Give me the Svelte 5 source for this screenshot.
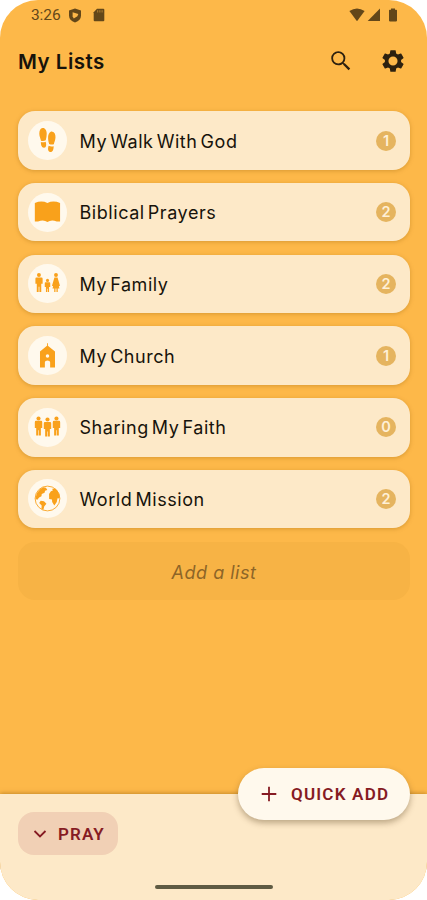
<script lang="ts">
  type List = { name: string; icon: string; count: number };

  let lists = $state<List[]>([
    { name: "My Walk With God", icon: "steps", count: 1 },
    { name: "Biblical Prayers", icon: "book", count: 2 },
    { name: "My Family", icon: "family", count: 2 },
    { name: "My Church", icon: "church", count: 1 },
    { name: "Sharing My Faith", icon: "people", count: 0 },
    { name: "World Mission", icon: "globe", count: 2 },
  ]);
</script>

{#snippet listIcon(name: string)}
  <svg class="list-icon" viewBox="0 0 40 40" aria-hidden="true">
    {#if name === "steps"}
      <path d="M14.9 7.2c2.6-.3 4.300 2.400 4.300 5.800 0 2.300-.4 4.600-1 6.800-1.500.8-3.200.9-4.900.4-.3-2.100-1.700-4.400-1.700-7.200 0-3 1.100-5.600 3.300-5.800z" />
      <path d="M13.200 21.600c1.600.4 3.300.3 4.900-.4.9 2.700.8 6-1.600 6.200-2.400.2-3.400-2.800-3.300-5.800z" />
      <path d="M24.900 10.900c2.300.3 3.400 2.700 3.300 5.700-.1 2.700-1.200 4.900-1.700 7.200-1.700.6-3.300.4-4.800-.3-.8-2.300-1.200-4.700-1.100-6.800.2-3.500 1.800-6.100 4.300-5.800z" />
      <path d="M21.200 25.500c1.600.7 3.200.8 5.100.4.1 2.900-.9 6.300-3.500 6-2.500-.3-2.700-3.700-1.600-6.400z" />
    {:else if name === "book"}
      <path d="M7 10.200Q14 7.400 19.900 10.200Q26 7.400 32.900 10.200V29.200H29.500Q24 26.900 19.900 29.700Q16 26.900 10.300 29.200H7z" />
    {:else if name === "family"}
      <circle cx="11.200" cy="11.300" r="2" />
      <path d="M8.600 13.800h5.200q1.200 0 1.200 1.300v5.200h-1.400v8.300h-1.900v-5.200h-.8v5.200H9v-8.300H7.600v-5.200q0-1.300 1-1.300z" />
      <circle cx="20" cy="16.800" r="1.600" />
      <path d="M17.900 18.800h4.200q.7 0 .7.900v4h-1.200v5h-1.300v-3.200h-.6v3.200h-1.300v-5h-1.200v-4q0-.9.700-.9z" />
      <circle cx="28.700" cy="11.300" r="2" />
      <path d="M27.100 13.800h3.200l2.500 8.500-1.200.4.700 2.300h-1.800v3.700h-1.300v-3.700h-1v3.700h-1.300v-3.700h-1.800l.7-2.300-1.200-.4z" />
    {:else if name === "church"}
      <path fill-rule="evenodd" d="M19.500 7.500h.9v2.600l7.300 5.900v16.200h-5v-5.200q0-1.800-2.700-1.800t-2.700 1.800v5.200h-5V16l7.200-5.900zM20 18.700a1.800 1.800 0 1 0 0 3.600 1.800 1.800 0 1 0 0-3.600z" />
    {:else if name === "people"}
      {#each [10.8, 20, 29.2] as x, i}
        <g transform="translate({x} {i === 1 ? 0.8 : -0.3})">
          <circle cx="0" cy="11" r="2.100" />
          <path d="M-2.600 13.500h5.200q1.200 0 1.200 1.300v6H2.400v7.700H.3v-5.300h-.6v5.300h-2.100v-7.700h-1.400v-6q0-1.300 1.200-1.300z" />
        </g>
      {/each}
    {:else if name === "globe"}
      <circle class="outline" cx="20" cy="20" r="12.700" />
      <path d="M9 14.500q2.600-4.400 6.600-6l2.800.4 1.400 2.400-2.300.8-.5 2-2.900 1.400-.3 2.200-2.400 1.400-1.800 2.300-2-1z" />
      <path d="M13 22.400l3.400.5 2.500 2.500-2.300 2.900-.8 3.200-2-.5.200-3.700-2.500-2.700z" />
      <path d="M21.600 15.500l1.900-2.900 2-.8-.7-1.800 3.400.1q3 2.300 4 6l.2 3.900-2.100-.3-.8 3.900-2.500 3.500-2.200-3.500-.2-2.500-2.900-.5z" />
    {/if}
  </svg>
{/snippet}

<div class="screen">
  <div class="status-bar">
    <span class="clock">3:26</span>
    <svg class="shield" width="14" height="15" viewBox="0 0 14 15">
      <path d="M7 .5l6 2v5q0 4.800-6 7-6-2.200-6-7v-5z" />
      <path class="cut" d="M4.600 4.300L10.300 5.900 9.400 8.200 5.800 10.400 4.600 8.500z" />
    </svg>
    <svg class="card-icon" width="12" height="14" viewBox="0 0 12 14">
      <path d="M4 .8h6.300q1 0 1 1v10.400q0 1-1 1H1.700q-1 0-1-1V4.200z" />
      <path class="slots" d="M4.700 2.200v2.300M6.900 2.200v2.300M9.100 2.200v2.300" />
    </svg>
    <div class="signals">
      <svg width="16" height="14" viewBox="0 0 16 14"><path d="M.4 3Q8-2.200 15.600 3L8 13.300z" /></svg>
      <svg width="14" height="14" viewBox="0 0 14 14"><path d="M.7 13L13 .4V13z" /></svg>
      <svg class="battery" width="10" height="14" viewBox="0 0 10 14"><path d="M3 .5h4v1.300h1.200q.8 0 .8.800v10q0 .8-.8.800H1.800q-.8 0-.8-.8v-10q0-.8.800-.8H3z" /></svg>
    </div>
  </div>

  <header>
    <h1>My Lists</h1>
    <button type="button" class="icon-btn" aria-label="Search">
      <svg width="26" height="26" viewBox="0 0 24 24">
        <path d="M15.500 14h-.79l-.28-.27A6.471 6.471 0 0 0 16 9.500 6.500 6.500 0 1 0 9.500 16c1.610 0 3.090-.59 4.230-1.570l.27.28v.79l5 4.990L20.490 19l-4.990-5zm-6 0.300C6.850 14.300 4.700 12.150 4.700 9.500S6.850 4.700 9.500 4.700 14.300 6.850 14.300 9.500 12.150 14.300 9.500 14.300z" />
      </svg>
    </button>
    <button type="button" class="icon-btn" aria-label="Settings">
      <svg width="26" height="26" viewBox="0 0 24 24">
        <path fill-rule="evenodd" d="M19.430 12.980c.04-.32.07-.64.07-.98s-.03-.66-.07-.98l2.110-1.650c.19-.15.24-.42.12-.64l-2-3.460c-.12-.22-.39-.3-.61-.22l-2.490 1c-.52-.4-1.080-.73-1.690-.98l-.38-2.650A.488.488 0 0 0 14 2h-4c-.25 0-.46.18-.49.42l-.38 2.650c-.61.25-1.170.59-1.690.98l-2.490-1c-.23-.09-.49 0-.61.22l-2 3.460c-.13.22-.07.49.12.64l2.110 1.650c-.04.32-.07.65-.07.98s.03.66.07.98l-2.110 1.650c-.19.15-.24.42-.12.64l2 3.460c.12.22.39.3.61.22l2.490-1c.52.4 1.080.73 1.690.98l.38 2.650c.03.24.24.42.49.42h4c.25 0 .46-.18.49-.42l.38-2.650c.61-.25 1.170-.59 1.690-.98l2.490 1c.23.09.49 0 .61-.22l2-3.460c.12-.22.07-.49-.12-.64zM12 16.200a4.200 4.200 0 1 1 0-8.400 4.200 4.200 0 0 1 0 8.400z" />
      </svg>
    </button>
  </header>

  <main>
    {#each lists as list}
      <button type="button" class="list-card">
        <span class="list-avatar">{@render listIcon(list.icon)}</span>
        <span class="list-name">{list.name}</span>
        <span class="list-count">{list.count}</span>
      </button>
    {/each}
    <button type="button" class="add-list">Add a list</button>
  </main>

  <footer>
    <button type="button" class="pray">
      <svg width="14" height="10" viewBox="0 0 14 10"><path d="M1.500 2L7 7.500 12.500 2" /></svg>
      PRAY
    </button>
    <button type="button" class="quick-add">
      <svg width="16" height="16" viewBox="0 0 16 16"><path d="M8 .7v14.600M.7 8h14.600" /></svg>
      QUICK ADD
    </button>
    <div class="home-bar"></div>
  </footer>
</div>

<style>
  :global(body) {
    background: #fff;
  }

  .screen {
    display: flex;
    flex-direction: column;
    width: 427px;
    height: 900px;
    overflow: hidden;
    border-radius: 38px;
    background: #fdb849;
    font-family: Inter, Roboto, "Liberation Sans", sans-serif;
    color: #17130b;
  }

  button {
    margin: 0;
    padding: 0;
    border: none;
    background: none;
    font: inherit;
    color: inherit;
    cursor: pointer;
  }

  svg {
    display: block;
    flex-shrink: 0;
    fill: currentColor;
  }

  .status-bar {
    display: flex;
    align-items: center;
    height: 30px;
    padding: 0 29px 0 31px;
    color: #634719;
  }

  .clock {
    width: 37px;
    font-family: Roboto, sans-serif;
    font-size: 15.5px;
    letter-spacing: -0.1px;
  }

  .card-icon {
    margin-left: 11px;
  }

  .cut {
    fill: #fdb849;
  }

  .slots {
    stroke: #b98534;
    stroke-width: 0.9;
  }

  .signals {
    display: flex;
    gap: 2px;
    margin-left: auto;
  }

  .battery {
    margin-left: 5px;
  }

  header {
    display: flex;
    align-items: center;
    height: 62px;
    padding: 0 21px 0 18px;
    box-sizing: border-box;
  }

  h1 {
    flex: 1;
    margin: 0;
    padding-top: 1px;
    font-size: 20.5px;
    font-weight: 600;
    letter-spacing: 0.5px;
  }

  .icon-btn {
    margin-left: 26px;
    color: #2d210f;
  }

  main {
    display: flex;
    flex: 1;
    flex-direction: column;
    gap: 13.2px;
    padding: 19.3px 17px 0 18px;
  }

  .list-card {
    display: flex;
    align-items: center;
    height: 58.5px;
    padding: 0 14px 0 9.5px;
    border-radius: 17px;
    background: #fde9c8;
    box-shadow: 0 1px 4px rgba(150, 95, 10, 0.35);
    text-align: left;
  }

  .list-avatar {
    width: 39px;
    height: 39px;
    border-radius: 50%;
    background: #fff9ed;
    color: #f9a11b;
  }

  .list-icon {
    width: 39px;
    height: 39px;
  }

  .outline {
    fill: none;
    stroke: currentColor;
    stroke-width: 0.9;
  }

  .list-name {
    flex: 1;
    margin-left: 13px;
    padding-top: 1px;
    font-size: 18px;
    letter-spacing: 0.55px;
    word-spacing: -2.5px;
  }

  .list-count {
    width: 20px;
    height: 20px;
    border-radius: 50%;
    background: #e5b45f;
    color: #fff0d6;
    font-size: 14.5px;
    font-weight: 600;
    line-height: 20px;
    text-align: center;
  }

  .add-list {
    height: 58px;
    margin-top: 1px;
    padding-top: 2px;
    border-radius: 17px;
    background: #f7b345;
    color: #8d6527;
    font-size: 18px;
    font-style: italic;
    letter-spacing: 0.5px;
  }

  footer {
    position: relative;
    display: flex;
    flex-direction: column;
    align-items: flex-start;
    height: 106px;
    padding: 18px 18px 0;
    box-sizing: border-box;
    background: #fde9c8;
    box-shadow: 0 -1px 4px rgba(150, 95, 10, 0.5);
    font-family: Roboto, "Liberation Sans", sans-serif;
    font-size: 17px;
    font-weight: 600;
    color: #861b23;
  }

  footer path {
    fill: none;
    stroke: currentColor;
    stroke-width: 1.8;
  }

  .pray {
    display: flex;
    align-items: center;
    gap: 11px;
    width: 100px;
    height: 43px;
    padding-left: 15px;
    border-radius: 16px;
    background: #f1d0b5;
    letter-spacing: 1.1px;
  }

  /* floats over the top edge of the footer */
  .quick-add {
    position: absolute;
    top: -26px;
    right: 17px;
    display: flex;
    align-items: center;
    gap: 14px;
    width: 172px;
    height: 52px;
    padding-left: 23px;
    border-radius: 26px;
    background: #fff9ed;
    box-shadow: 0 3px 6px rgba(90, 65, 30, 0.4);
    letter-spacing: 1.2px;
    white-space: nowrap;
  }

  .home-bar {
    align-self: center;
    width: 118px;
    height: 4px;
    margin-top: 30px;
    border-radius: 2px;
    background: #5f5b43;
  }
</style>
